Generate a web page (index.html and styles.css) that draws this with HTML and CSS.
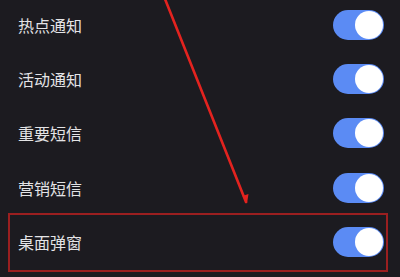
FILE: index.html
```html
<!DOCTYPE html>
<html lang="zh">
<head>
<meta charset="utf-8">
<link rel="stylesheet" href="styles.css">
</head>
<body>
<div class="screen">
  <ul class="list">
    <li class="row"><span class="label">热点通知</span><span class="toggle"><span class="knob"></span></span></li>
    <li class="row"><span class="label">活动通知</span><span class="toggle"><span class="knob"></span></span></li>
    <li class="row"><span class="label">重要短信</span><span class="toggle"><span class="knob"></span></span></li>
    <li class="row"><span class="label">营销短信</span><span class="toggle"><span class="knob"></span></span></li>
    <li class="row"><span class="label">桌面弹窗</span><span class="toggle"><span class="knob"></span></span></li>
  </ul>
  <div class="highlight"></div>
  <svg class="arrow" width="400" height="277" viewBox="0 0 400 277">
    <line x1="165" y1="-1" x2="246" y2="202" stroke="#e3231f" stroke-width="2.6" stroke-linecap="round"/>
    <polygon points="242.5,196 248.5,194 247,203.5" fill="#e3231f"/>
  </svg>
</div>
</body>
</html>
```

FILE: styles.css
```css
html, body {
  margin: 0;
  padding: 0;
  background: #1c1b20;
}
.screen {
  position: relative;
  width: 400px;
  height: 277px;
  overflow: hidden;
  background: #1c1b20;
  font-family: "Noto Sans CJK SC", "Noto Sans", sans-serif;
}
.list {
  list-style: none;
  margin: 0;
  padding: 9.5px 16px 0 18px;
  display: flex;
  flex-direction: column;
  gap: 24.4px;
}
.row {
  height: 30px;
  display: flex;
  align-items: center;
  justify-content: space-between;
}
.label {
  color: #e4e4e6;
  font-size: 16px;
  line-height: 30px;
  letter-spacing: 0;
}
.toggle {
  width: 51px;
  height: 30px;
  box-sizing: border-box;
  border-radius: 15px;
  background: #5b8bf4;
  padding: 1px;
  display: flex;
  justify-content: flex-end;
}
.knob {
  width: 28px;
  height: 28px;
  border-radius: 50%;
  background: #ffffff;
}
.highlight {
  position: absolute;
  left: 8px;
  top: 213px;
  width: 380px;
  height: 59px;
  box-sizing: border-box;
  border: 2px solid #9b1f20;
}
.arrow {
  position: absolute;
  left: 0;
  top: 0;
}
```
